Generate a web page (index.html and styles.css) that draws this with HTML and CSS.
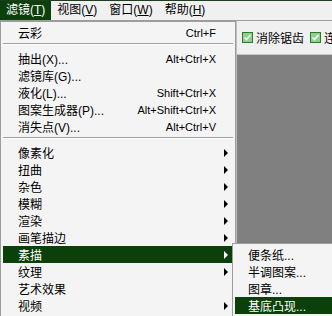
FILE: index.html
```html
<!DOCTYPE html>
<html lang="zh-CN">
<head>
    <meta charset="UTF-8">
    <title>滤镜菜单</title>
    <link rel="stylesheet" href="styles.css">
</head>
<body>

<div class="window">
    <div class="menubar">
        <div class="menubar-item active">滤镜(<u>T</u>)</div>
        <div class="menubar-item">视图(<u>V</u>)</div>
        <div class="menubar-item">窗口(<u>W</u>)</div>
        <div class="menubar-item">帮助(<u>H</u>)</div>
    </div>

    <div class="workspace">
        <div class="toolbar">
            <span class="grip"></span>
            <label class="option">
                <svg class="check" width="11" height="11" viewBox="0 0 11 11">
                    <rect x="0.5" y="0.5" width="10" height="10" fill="#8fcf8f" stroke="#2d7a2d"/>
                    <path d="M2.5 5.5 L4.5 7.5 L8.5 3" fill="none" stroke="#f4fff4" stroke-width="1.6"/>
                </svg>
                消除锯齿
            </label>
            <label class="option">
                <svg class="check" width="11" height="11" viewBox="0 0 11 11">
                    <rect x="0.5" y="0.5" width="10" height="10" fill="#8fcf8f" stroke="#2d7a2d"/>
                    <path d="M2.5 5.5 L4.5 7.5 L8.5 3" fill="none" stroke="#f4fff4" stroke-width="1.6"/>
                </svg>
                连续
            </label>
        </div>
        <div class="canvas"></div>
    </div>

    <!-- Filter dropdown -->
    <div class="menu filter-menu">
        <div class="menu-item"><span>云彩</span><span class="shortcut">Ctrl+F</span></div>
        <div class="separator"></div>
        <div class="menu-item"><span>抽出(X)...</span><span class="shortcut">Alt+Ctrl+X</span></div>
        <div class="menu-item"><span>滤镜库(G)...</span></div>
        <div class="menu-item"><span>液化(L)...</span><span class="shortcut">Shift+Ctrl+X</span></div>
        <div class="menu-item"><span>图案生成器(P)...</span><span class="shortcut">Alt+Shift+Ctrl+X</span></div>
        <div class="menu-item"><span>消失点(V)...</span><span class="shortcut">Alt+Ctrl+V</span></div>
        <div class="separator"></div>
        <div class="menu-item"><span>像素化</span><span class="arrow"></span></div>
        <div class="menu-item"><span>扭曲</span><span class="arrow"></span></div>
        <div class="menu-item"><span>杂色</span><span class="arrow"></span></div>
        <div class="menu-item"><span>模糊</span><span class="arrow"></span></div>
        <div class="menu-item"><span>渲染</span><span class="arrow"></span></div>
        <div class="menu-item"><span>画笔描边</span><span class="arrow"></span></div>
        <div class="menu-item selected"><span>素描</span><span class="arrow"></span></div>
        <div class="menu-item"><span>纹理</span><span class="arrow"></span></div>
        <div class="menu-item"><span>艺术效果</span></div>
        <div class="menu-item"><span>视频</span><span class="arrow"></span></div>
    </div>

    <!-- Sketch submenu -->
    <div class="menu submenu">
        <div class="menu-item"><span>便条纸...</span></div>
        <div class="menu-item"><span>半调图案...</span></div>
        <div class="menu-item"><span>图章...</span></div>
        <div class="menu-item selected"><span>基底凸现...</span></div>
    </div>
</div>

</body>
</html>
```

FILE: styles.css
```css
* {
    box-sizing: border-box;
}
body {
    margin: 0;
    width: 332px;
    height: 316px;
    overflow: hidden;
    font-family: "Liberation Sans", "Noto Sans CJK SC", sans-serif;
    font-size: 12px;
    color: #000;
    background-color: #808080;
}
.window {
    position: relative;
    width: 332px;
    height: 316px;
    overflow: hidden;
    display: flex;
    flex-direction: column;
}
.menubar {
    height: 21px;
    display: flex;
    background-color: #f0f0f0;
    border-top: 1px solid #1d3d1d;
    border-bottom: 1px solid #9c9c9c;
}
.menubar-item {
    padding: 0 6px;
    line-height: 19px;
    white-space: nowrap;
}
.menubar-item.active {
    background-color: #0b400b;
    color: #fff;
}
.workspace {
    flex: 1;
    display: flex;
    flex-direction: column;
}
.toolbar {
    height: 34px;
    display: flex;
    align-items: center;
    padding-left: 235px;
    background-color: #f0f0f0;
    border-bottom: 1px solid #c4c4c4;
    white-space: nowrap;
    overflow: hidden;
}
.grip {
    width: 2px;
    height: 17px;
    margin-right: 7px;
    background-color: #b8d8b2;
}
.option {
    display: flex;
    align-items: center;
    margin-right: 6px;
}
.check {
    margin-right: 3px;
}
.canvas {
    flex: 1;
    background-color: #808080;
}
.menu {
    position: absolute;
    background-color: #f4f4f4;
    border: 1px solid #9d9d9d;
    padding: 2px;
}
.filter-menu {
    left: 0;
    top: 21px;
    width: 236px;
    box-shadow: 1px 0 0 #bdbdbd;
}
.submenu {
    left: 232px;
    top: 243px;
    width: 110px;
}
.menu-item {
    display: flex;
    align-items: center;
    height: 17px;
    padding-left: 15px;
    white-space: nowrap;
    position: relative;
}
.submenu .menu-item {
    padding-left: 13px;
}
.menu-item.selected {
    background-color: #0b400b;
    color: #fff;
}
.shortcut {
    margin-left: auto;
    margin-right: 17px;
    font-size: 11px;
}
.arrow {
    margin-left: auto;
    margin-right: 5px;
    width: 0;
    height: 0;
    border-top: 4px solid transparent;
    border-bottom: 4px solid transparent;
    border-left: 4px solid #000;
}
.selected .arrow {
    border-left-color: #fff;
}
.separator {
    height: 2px;
    margin: 2px 0 5px;
    border-top: 1px solid #a0a0a0;
    border-bottom: 1px solid #fff;
}
```
